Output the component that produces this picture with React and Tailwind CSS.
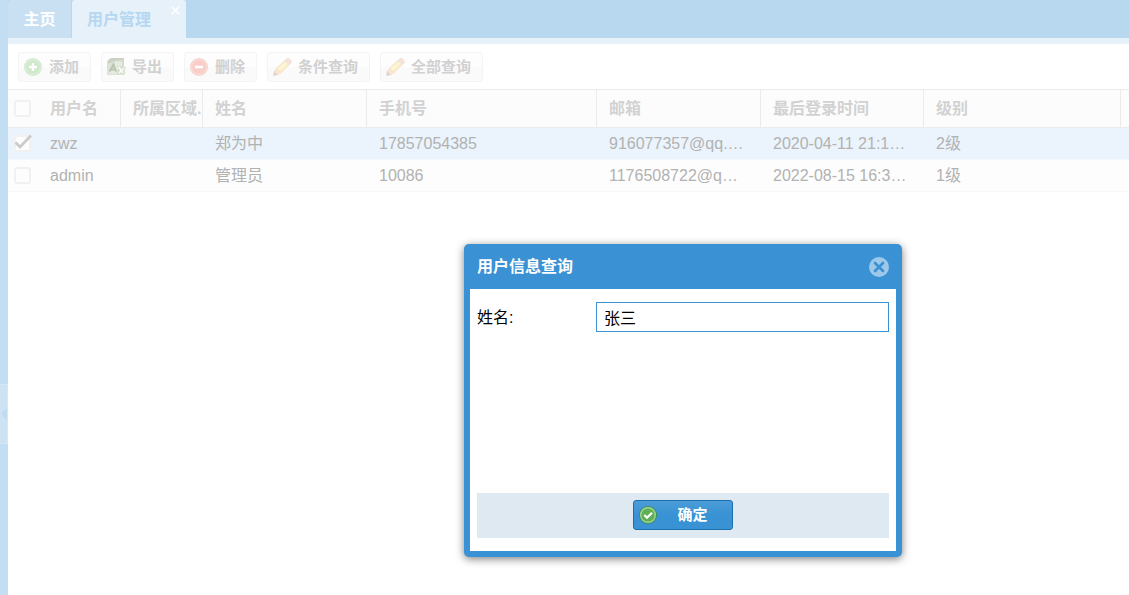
import React, { useId, useState } from "react";

function AddIcon() {
  return (
    <svg className="size-[18px] shrink-0" viewBox="0 0 18 18" aria-hidden="true">
      <circle cx="9" cy="9" r="9" fill="#d3e9d1" />
      <circle cx="9" cy="9" r="7.400" fill="#cfe9ca" stroke="#e0f1de" strokeWidth="1" />
      <path d="M9 5v8M5 9h8" stroke="#fff" strokeWidth="2.400" />
    </svg>
  );
}

function RemoveIcon() {
  return (
    <svg className="size-[18px] shrink-0" viewBox="0 0 18 18" aria-hidden="true">
      <circle cx="9" cy="9" r="9" fill="#f6d2ce" />
      <circle cx="9" cy="9" r="7.400" fill="#f9cec8" stroke="#fadfdb" strokeWidth="1" />
      <path d="M5 9h8" stroke="#fff" strokeWidth="2.600" />
    </svg>
  );
}

function ExportIcon() {
  return (
    <svg className="-mr-0.5 h-[18px] w-5 shrink-0" viewBox="0 0 20 18" aria-hidden="true">
      <path d="M0 4Q1 .5 5 0h12v15q-1 2-4 2H0z" fill="#dce3d6" />
      <path d="M1 3Q2 .5 5 0h12l-1.500 2.500Q8 1 1 6z" fill="#c9d2c2" />
      <path d="M15 2 17 0v12h-2z" fill="#d3dbcd" />
      <path d="M1.500 15.500Q3 5 11 3.500h4V14l-3 2z" fill="#e6ebe1" />
      <path d="m2.500 13.500 4-7 2.500 7M4 11.500h4" stroke="#b9c5b1" strokeWidth="2" fill="none" />
      <path d="m10 7.500 4 1 5 .5-1.500 4 1 1.500-2 3-3-1.500-3 .5-1-2.500 1.500-2.500z" fill="#d5dfcd" />
      <path d="m11.500 9 4.500 6M17 10l-5 5" stroke="#fafcf8" strokeWidth="1.600" />
    </svg>
  );
}

function PencilIcon() {
  return (
    <svg className="-mr-0.5 h-[18px] w-5 shrink-0" viewBox="0 0 20 18" aria-hidden="true">
      <path d="M0 18 1 12.500 5.500 17z" fill="#e2d6cf" />
      <path d="M1 12.800 3.500 10 9 14.500 5.500 17z" fill="#f8e6d6" />
      <path d="M3 10.500 12 2.500l4.500 4-8.500 8z" fill="#fbedc6" stroke="#f5dfc2" strokeWidth=".8" />
      <path d="m4.500 11 8.500-7 1.600 1.500-8 7z" fill="#fdf6db" />
      <path d="m12 2 1.500-1.500q1-.7 2-.4 2.600 1 3.300 3.500.3 1-.5 1.700L17 6.500z" fill="#f7e0d6" />
      <path d="m11.500 2.300 5 4.500" stroke="#eae7e2" strokeWidth="1.200" />
    </svg>
  );
}

function ConfirmIcon() {
  return (
    <svg className="size-[18px] shrink-0" viewBox="0 0 18 18" aria-hidden="true">
      <circle cx="9" cy="9" r="9" fill="#3f9148" />
      <circle cx="9" cy="9" r="7.300" fill="#5db054" stroke="#a3d698" strokeWidth="1.400" />
      <path d="m5.300 9 2.700 2.700 5-5" fill="none" stroke="#fff" strokeWidth="2.300" />
    </svg>
  );
}

const tools = [
  { label: "添加", Icon: AddIcon },
  { label: "导出", Icon: ExportIcon },
  { label: "删除", Icon: RemoveIcon },
  { label: "条件查询", Icon: PencilIcon },
  { label: "全部查询", Icon: PencilIcon },
];

const headings = ["所属区域.", "姓名", "手机号", "邮箱", "最后登录时间", "级别"];

const users = [
  {
    account: "zwz",
    selected: true,
    cells: ["", "郑为中", "17857054385", "916077357@qq.…", "2020-04-11 21:1…", "2级"],
  },
  {
    account: "admin",
    selected: false,
    cells: ["", "管理员", "10086", "1176508722@q…", "2022-08-15 16:3…", "1级"],
  },
];

function Tick({ label, checked, onChange }) {
  return (
    <label className="relative flex h-4 w-5 items-center">
      <input
        type="checkbox"
        aria-label={label}
        checked={checked}
        onChange={onChange}
        className="peer size-[17px] appearance-none rounded-[3px] border-2 border-[#f1f1f1] bg-[#fdfdfd]"
      />
      <svg
        className="pointer-events-none absolute -top-0.5 left-0 hidden h-4 w-[18px] peer-checked:block"
        viewBox="0 0 18 16"
        aria-hidden="true"
      >
        <path d="m1.500 8.500 4.500 4.500L17 1.500" fill="none" stroke="#cbcbcb" strokeWidth="2.800" />
      </svg>
    </label>
  );
}

function UserTable() {
  const [selected, setSelected] = useState(users.map((u) => u.selected));
  const all = selected.every(Boolean);
  return (
    <table className="w-full table-fixed border-separate border-spacing-0 text-left text-base leading-5">
      <colgroup>
        <col className="w-[30px]" />
        <col className="w-[83px]" />
        <col className="w-[82px]" />
        <col className="w-[164px]" />
        <col className="w-[230px]" />
        <col className="w-[164px]" />
        <col className="w-[163px]" />
        <col className="w-[197px]" />
        <col />
      </colgroup>
      <thead>
        <tr className="h-[39px] bg-[#fcfcfc] text-[#d2d2d2] *:border-y *:border-[#ebebeb]">
          <th className="pl-1.5">
            <Tick label="全选" checked={all} onChange={() => setSelected(users.map(() => !all))} />
          </th>
          <th className="border-r pl-3">用户名</th>
          {headings.map((h) => (
            <th key={h} className="overflow-hidden border-r pl-3 whitespace-nowrap">
              {h}
            </th>
          ))}
          <th />
        </tr>
      </thead>
      <tbody>
        {users.map((u, i) => (
          <tr
            key={u.account}
            className={
              selected[i]
                ? "h-8 bg-[#ebf4fc] text-[#b2b2b2] *:border-b *:border-[#f5f8fb]"
                : "h-8 bg-[#fdfdfd] text-[#b2b2b2] *:border-b *:border-[#f7f7f7]"
            }
          >
            <td className="pl-1.5">
              <Tick
                label={u.account}
                checked={selected[i]}
                onChange={() => setSelected(selected.map((s, j) => (j === i ? !s : s)))}
              />
            </td>
            <td className="pl-3">{u.account}</td>
            {u.cells.map((c, j) => (
              <td key={j} className="overflow-hidden pl-3 whitespace-nowrap">
                {c}
              </td>
            ))}
            <td />
          </tr>
        ))}
      </tbody>
    </table>
  );
}

function QueryDialog() {
  const id = useId();
  return (
    <section
      role="dialog"
      aria-labelledby={id + "t"}
      className="absolute top-[244px] left-[464px] flex h-[313px] w-[438px] flex-col rounded-[5px] bg-[#3a92d4] px-1.5 pb-1.5 shadow-[0_2px_8px_rgba(0,0,0,0.5)]"
    >
      <header className="flex h-[45px] items-center justify-between px-[7px]">
        <h2 id={id + "t"} className="pt-px text-base font-bold text-white">
          用户信息查询
        </h2>
        <button type="button" aria-label="关闭">
          <svg className="size-5" viewBox="0 0 20 20" aria-hidden="true">
            <circle cx="10" cy="10" r="10" fill="#9dc8e9" />
            <path d="m6 6 8 8M14 6l-8 8" stroke="#3a92d4" strokeWidth="2.600" strokeLinecap="round" />
          </svg>
        </button>
      </header>
      <form
        onSubmit={(e) => e.preventDefault()}
        className="flex flex-1 flex-col justify-between bg-white px-[7px] py-[13px]"
      >
        <div className="flex items-center">
          <label htmlFor={id + "n"} className="w-[119px] pt-0.5 text-base text-black">
            姓名:
          </label>
          <input
            id={id + "n"}
            type="text"
            defaultValue="张三"
            className="h-[30px] min-w-0 flex-1 border border-[#3a92d4] bg-white pl-[7px] text-base text-black outline-none"
          />
        </div>
        <div className="flex h-[45px] items-start justify-center bg-[#dfe9f2] pt-[7px]">
          <button
            type="submit"
            className="flex h-[30px] w-[100px] items-center rounded-[3px] border border-[#1a6eae] bg-linear-to-b from-[#4b9cd7] via-[#3892d3] via-50% to-[#3892d4] pr-2 pl-[5px] text-[15px] font-bold text-white"
          >
            <ConfirmIcon />
            <span className="flex-1 pl-1 text-center">确定</span>
          </button>
        </div>
      </form>
    </section>
  );
}

export default function App() {
  return (
    <div className="relative flex min-h-screen bg-white font-['Liberation_Sans','Noto_Sans_CJK_SC',sans-serif]">
      <aside className="flex w-2 shrink-0 flex-col bg-[#c3ddf2]">
        <div className="h-96" />
        <button
          type="button"
          aria-label="折叠"
          className="flex h-[60px] items-center justify-center border-y border-r border-[#d5e8f4] bg-[#cde2f2]"
        >
          <svg className="h-3 w-1.5" viewBox="0 0 6 12" aria-hidden="true">
            <path d="M6 0v12L0 6z" fill="#bfdbee" />
          </svg>
        </button>
      </aside>
      <main className="min-w-0 flex-1">
        <nav className="flex h-11 border-b-[6px] border-[#e6f1fa] bg-[#b8d8ef]">
          <button
            type="button"
            className="mr-px w-[63px] rounded-tl-[3px] bg-[#c9e0f3] pt-px text-base font-bold text-white"
          >
            主页
          </button>
          <div className="flex w-[114px] rounded-t-[3px] bg-[#e6f1fa]">
            <button type="button" className="pt-px pl-[15px] text-base font-bold text-[#b5d7f0]">
              用户管理
            </button>
            <button type="button" aria-label="关闭" className="ml-auto flex h-5 w-[21px] items-center justify-center">
              <svg className="size-[9px]" viewBox="0 0 9 9" aria-hidden="true">
                <path d="m.8.8 7.400 7.400M8.200.8.800 8.200" stroke="#fff" strokeWidth="1.600" />
              </svg>
            </button>
          </div>
        </nav>
        <div className="flex h-[45px] items-center gap-2.5 px-2.5">
          {tools.map(({ label, Icon }) => (
            <button
              key={label}
              type="button"
              className="flex h-[30px] items-center gap-[7px] rounded-[3px] border border-[#f4f4f4] bg-linear-to-b from-[#fdfdfd] from-50% to-[#fafafa] to-50% pr-[11px] pl-[5px] text-[15px] font-bold text-[#d1d1d1]"
            >
              <Icon />
              <span className="pt-px">{label}</span>
            </button>
          ))}
        </div>
        <UserTable />
      </main>
      <QueryDialog />
    </div>
  );
}
